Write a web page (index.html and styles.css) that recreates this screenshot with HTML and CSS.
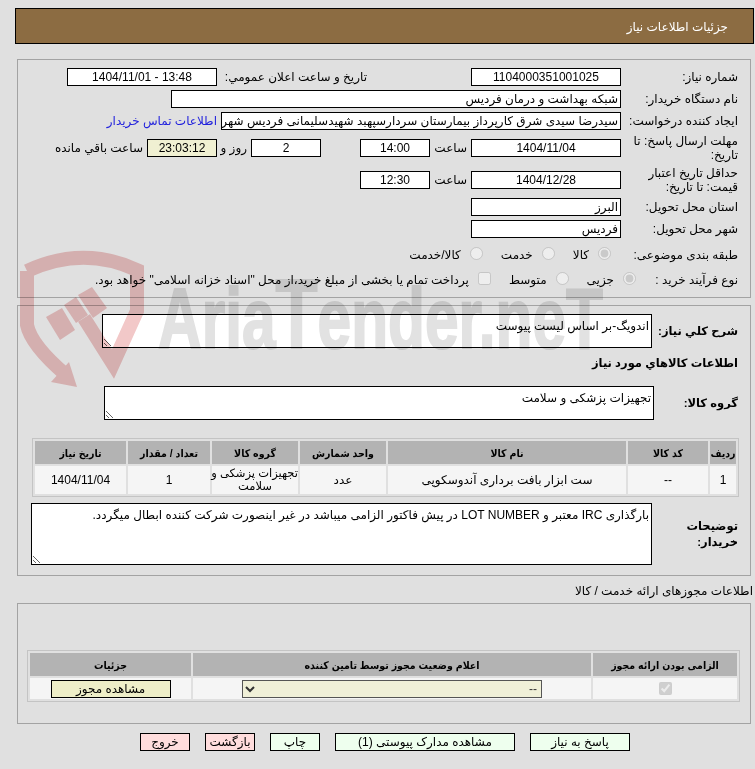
FILE: index.html
```html
<!DOCTYPE html>
<html lang="fa" dir="rtl">
<head>
<meta charset="utf-8">
<title>جزئیات اطلاعات نیاز</title>
<link rel="stylesheet" href="styles.css">
</head>
<body>
<header class="title-bar">جزئیات اطلاعات نیاز</header>

<section class="panel panel-info">
  <div class="row">
    <div class="label">شماره نیاز:</div>
    <div class="field w150 center">1104000351001025</div>
    <div class="label label-date">تاریخ و ساعت اعلان عمومي:</div>
    <div class="field w150 center">13:48 - 1404/11/01</div>
  </div>
  <div class="row">
    <div class="label">نام دستگاه خریدار:</div>
    <div class="field w450">شبکه بهداشت و درمان فردیس</div>
  </div>
  <div class="row">
    <div class="label">ایجاد کننده درخواست:</div>
    <div class="field w400">سیدرضا سیدی شرق کارپرداز بیمارستان سردارسپهبد شهیدسلیمانی فردیس شهرستان فردیس</div>
    <a class="contact" href="#">اطلاعات تماس خریدار</a>
  </div>
  <div class="row row-tall">
    <div class="label">مهلت ارسال پاسخ: تا تاریخ:</div>
    <div class="field w150 center">1404/11/04</div>
    <div class="unit">ساعت</div>
    <div class="field w70 center">14:00</div>
    <div class="field w70 center gap-days">2</div>
    <div class="unit-days">روز و</div>
    <div class="field w70 center timer">23:03:12</div>
    <div class="remain">ساعت باقي مانده</div>
  </div>
  <div class="row row-tall">
    <div class="label">حداقل تاریخ اعتبار قیمت: تا تاریخ:</div>
    <div class="field w150 center">1404/12/28</div>
    <div class="unit">ساعت</div>
    <div class="field w70 center">12:30</div>
  </div>
  <div class="row">
    <div class="label">استان محل تحویل:</div>
    <div class="field w150">البرز</div>
  </div>
  <div class="row">
    <div class="label">شهر محل تحویل:</div>
    <div class="field w150">فردیس</div>
  </div>
  <div class="row row-choice">
    <div class="label">طبقه بندی موضوعی:</div>
    <div class="options options-subject">
      <label class="option"><input type="radio" name="subject" checked disabled>کالا</label>
      <label class="option"><input type="radio" name="subject" disabled>خدمت</label>
      <label class="option"><input type="radio" name="subject" disabled>کالا/خدمت</label>
    </div>
  </div>
  <div class="row row-choice-2">
    <div class="label label-short">نوع فرآیند خرید :</div>
    <div class="options">
      <label class="option"><input type="radio" name="process" checked disabled>جزیی</label>
      <label class="option"><input type="radio" name="process" disabled>متوسط</label>
      <label class="option"><input type="checkbox" disabled>پرداخت تمام یا بخشی از مبلغ خرید،از محل "اسناد خزانه اسلامی" خواهد بود.</label>
    </div>
  </div>
</section>

<section class="panel panel-goods">
  <div class="text-row">
    <div class="label-bold label-desc">شرح کلي نياز:</div>
    <textarea class="area area-short" readonly>اندویگ-بر اساس لیست پیوست</textarea>
  </div>
  <h2 class="goods-heading">اطلاعات کالاهاي مورد نياز</h2>
  <div class="text-row">
    <div class="label-bold label-group">گروه کالا:</div>
    <textarea class="area area-short" readonly>تجهیزات پزشکی و سلامت</textarea>
  </div>
  <table class="grid goods-table">
    <colgroup>
      <col class="c-row"><col class="c-code"><col class="c-name"><col class="c-unit"><col class="c-group"><col class="c-qty"><col class="c-date">
    </colgroup>
    <thead>
      <tr><th>ردیف</th><th>کد کالا</th><th>نام کالا</th><th>واحد شمارش</th><th>گروه کالا</th><th>تعداد / مقدار</th><th>تاریخ نیاز</th></tr>
    </thead>
    <tbody>
      <tr><td>1</td><td>--</td><td>ست ابزار بافت برداری آندوسکوپی</td><td>عدد</td><td class="cell-group">تجهیزات پزشکی و<br>سلامت</td><td>1</td><td>1404/11/04</td></tr>
    </tbody>
  </table>
  <div class="text-row note-row">
    <div class="label-bold label-note">توضیحات خریدار:</div>
    <textarea class="area area-tall" readonly>بارگذاری IRC معتبر و LOT NUMBER در پیش فاکتور الزامی میباشد در غیر اینصورت شرکت کننده ابطال میگردد.</textarea>
  </div>
</section>

<h2 class="permit-heading">اطلاعات مجوزهای ارائه خدمت / کالا</h2>
<section class="panel panel-permit">
  <table class="grid permit-table">
    <colgroup><col class="p-need"><col class="p-status"><col class="p-detail"></colgroup>
    <thead>
      <tr><th>الزامی بودن ارائه مجوز</th><th>اعلام وضعیت مجوز توسط تامین کننده</th><th>جزئیات</th></tr>
    </thead>
    <tbody>
      <tr>
        <td><input class="permit-check" type="checkbox" checked disabled></td>
        <td><select class="permit-select" disabled><option>--</option></select></td>
        <td><button class="btn-permit" type="button">مشاهده مجوز</button></td>
      </tr>
    </tbody>
  </table>
</section>

<nav class="actions">
  <button class="btn btn-green b100" type="button">پاسخ به نیاز</button>
  <button class="btn btn-green b180" type="button">مشاهده مدارک پیوستی (1)</button>
  <button class="btn btn-green b50" type="button">چاپ</button>
  <button class="btn btn-pink b50" type="button">بازگشت</button>
  <button class="btn btn-pink b50" type="button">خروج</button>
</nav>

<svg class="watermark" viewBox="0 0 755 769" aria-hidden="true">
  <g class="wm-logo">
    <path class="wm-band" d="M27 271 Q83 245 137 270 L137 311 L113 364 L84 318"/>
    <path class="wm-band" d="M27 271 L27 325 Q31 345 66 375"/>
    <path class="wm-fill" d="M69 362 L77 387 L51 382 Z"/>
    <path class="wm-fill" d="M46 317 L62 308 L75 330 L60 340 Z"/>
    <path class="wm-fill" d="M64 305 L76 297 L88 315 L76 323 Z"/>
    <path class="wm-fill" d="M78 295 L92 287 L107 308 L93 318 Z"/>
  </g>
  <text class="wm-text" x="158" y="348" textLength="445" lengthAdjust="spacingAndGlyphs">Aria<tspan class="wm-cap">T</tspan>ender.neT</text>
</svg>
</body>
</html>
```

FILE: styles.css
```css
* { box-sizing: border-box; }

html, body { height: 769px; overflow: hidden; }

body {
  margin: 0;
  padding-top: 8px;
  position: relative;
  background: #e0e0e0;
  color: #000;
  font: 12px/14px "Liberation Sans", "DejaVu Sans", sans-serif;
}

.title-bar {
  height: 36px;
  margin: 0 1px 0 15px;
  padding: 2px 25px 0 0;
  display: flex;
  align-items: center;
  background: #8c6c42;
  border: 1px solid #000;
  color: #fff;
}

.panel {
  margin: 0 4px 0 17px;
  border: 1px solid #a3a3a3;
}

.panel-info { height: 239px; margin-top: 15px; padding: 6px 12px 0 0; }

.row { display: flex; align-items: center; height: 22px; }
.row-tall { height: 32px; }
.row-choice { height: 27px; padding-top: 3px; }
.row-choice-2 { height: 23px; padding-top: 3px; }

.label { width: 117px; flex: none; }
.label-short { width: 102px; }
.label-date { width: 150px; margin-right: 104px; }

.field {
  height: 18px;
  flex: none;
  padding: 0 2px;
  background: #fff;
  border: 1px solid #000;
  line-height: 16px;
  white-space: nowrap;
  overflow: hidden;
}
.center { text-align: center; }
.w70 { width: 70px; }
.w150 { width: 150px; }
.w400 { width: 400px; }
.w450 { width: 450px; }
.timer { background: #f0f0d2; }
.gap-days { margin-right: 39px; }

.unit { width: 41px; flex: none; padding-right: 4px; }
.unit-days { width: 34px; flex: none; padding-right: 4px; }
.remain { padding-right: 4px; white-space: nowrap; }
.contact { margin-right: 4px; color: #2222dd; text-decoration: none; white-space: nowrap; }

.options { display: flex; gap: 18px; }
.options-subject { padding-right: 10px; }
.option { display: flex; align-items: center; gap: 9px; white-space: nowrap; }
.option input { width: 13px; height: 13px; margin: 0 0 3px; }

.panel-goods { height: 271px; margin-top: 7px; padding: 8px 12px 0 0; }

.text-row { display: flex; align-items: center; }
.label-bold { flex: none; font-size: 11.5px; font-weight: bold; }
.label-desc { width: 86px; }
.label-group { width: 84px; }
.label-note { width: 86px; line-height: 16px; }

.area {
  display: block;
  width: 550px;
  padding: 4px 2px 0;
  background: #fff;
  border: 1px solid #000;
  border-radius: 0;
  font: inherit;
  outline: 0;
}
.area-short { height: 34px; }
.area-tall { width: 621px; height: 62px; }

.goods-heading {
  height: 38px;
  margin: 0;
  padding-top: 8px;
  font-size: 11.5px;
  line-height: 14px;
  font-weight: bold;
}

.grid {
  table-layout: fixed;
  border-collapse: separate;
  border-spacing: 2px;
  background: transparent;
  border: 1px solid #c4c4c4;
  text-align: center;
}
.grid th {
  height: 23px;
  padding: 0;
  background: #b3b3b3;
  font-family: "Liberation Sans", "DejaVu Sans Condensed", "DejaVu Sans", sans-serif;
  font-size: 10.5px;
  font-weight: bold;
  white-space: nowrap;
}
.grid td { padding: 0; background: #f5f5f5; }
.grid .cell-group { font-size: 11.5px; line-height: 13px; white-space: nowrap; }

.goods-table { width: 707px; margin: 18px -1px 0 0; }
.goods-table td { height: 28px; }
.c-row { width: 26px; }
.c-code { width: 80px; }
.c-name { width: 238px; }
.c-unit { width: 86px; }
.c-group { width: 86px; }
.c-qty { width: 82px; }
.c-date { width: 91px; }

.note-row { margin-top: 6px; }

.permit-heading {
  height: 19px;
  margin: 8px 2px 0 0;
  font-size: 12px;
  line-height: 14px;
  font-weight: normal;
}

.panel-permit { height: 121px; padding: 46px 10px 0 0; }

.permit-table { width: 712px; }
.permit-table td { height: 21px; }
.p-need { width: 144px; }
.p-status { width: 398px; }
.p-detail { width: 161px; }

.permit-check { display: block; width: 13px; height: 13px; margin: 0 auto; }

.permit-select {
  display: block;
  width: 300px;
  height: 18px;
  margin: 0 auto;
  background: #f0f0d8;
  border: 1px solid #555;
  border-radius: 0;
  color: #333;
  opacity: 1;
  font: inherit;
}

.btn-permit {
  display: block;
  width: 120px;
  height: 18px;
  margin: 0 auto;
  padding: 0;
  background: #eeeec8;
  border: 1px solid #000;
  font: inherit;
}

.actions { display: flex; gap: 15px; margin-top: 9px; padding-right: 125px; }

.btn { height: 18px; padding: 0; border: 1px solid #000; font: inherit; white-space: nowrap; }
.btn-green { background: #eeffee; }
.btn-pink { background: #ffdddd; }
.b50 { width: 50px; }
.b100 { width: 100px; }
.b180 { width: 180px; }

.watermark {
  position: absolute;
  inset: 0;
  width: 755px;
  height: 769px;
  pointer-events: none;
  mix-blend-mode: multiply;
}
.wm-band { fill: none; stroke: #f2c8c8; stroke-width: 14; }
.wm-fill { fill: #f2c8c8; }
.wm-text {
  direction: ltr;
  fill: #e2e2e2;
  stroke: #e2e2e2;
  stroke-width: 2;
  font-family: "Liberation Sans Narrow", "Liberation Sans", sans-serif;
  font-size: 86px;
  font-weight: bold;
}
.wm-cap { font-size: 98px; }
```
